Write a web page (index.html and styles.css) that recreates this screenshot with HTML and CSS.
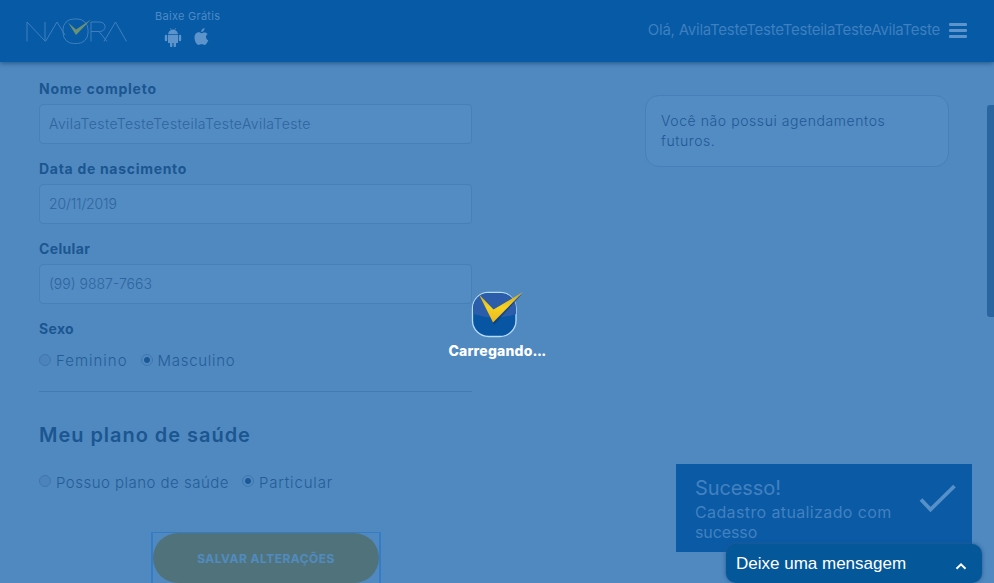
FILE: index.html
```html
<!DOCTYPE html>
<html lang="pt-BR">
<head>
<meta charset="utf-8">
<title>Naora</title>
<link rel="stylesheet" href="styles.css">
</head>
<body>
<header class="topbar">
  <svg class="logo" width="102" height="28" viewBox="0 0 102 28" role="img" aria-label="Naora">
    <g fill="none" stroke="#3f7fbe" stroke-width="1">
      <path d="M1 23.500V4l18 19V4M19.500 23.500L31 4l8 13" />
      <rect x="37" y="1" width="25" height="24.500" rx="10.500" />
      <path d="M65 23.500V4h8.500c7.500 0 7.500 9.500 0 9.500H65M73 13.500l8 10M78 23.500L89.500 4l11 19.500" />
    </g>
    <path class="logo-check" d="M42 4.500l8 7L65 1.500 50 17z" />
  </svg>
  <div class="download">
    <span class="download-label">Baixe Grátis</span>
    <div class="stores">
      <svg width="18" height="19" viewBox="0 0 18 19"><path d="M4 6a5 5 0 0 1 3-4L6 .4 6.400 0l1 1.700a6 6 0 0 1 3.200 0l1-1.700.4.400L11 2a5 5 0 0 1 3 4zM4 6.700h10V15h-2v3a1.200 1.200 0 0 1-2.400 0v-3H8.400v3A1.200 1.200 0 0 1 6 18v-3H4zM.8 8a1.200 1.200 0 0 1 2.400 0v4a1.200 1.200 0 0 1-2.400 0zM14.800 8a1.200 1.200 0 0 1 2.400 0v4a1.200 1.200 0 0 1-2.400 0z" /></svg>
      <svg width="15" height="18" viewBox="0 0 15 18"><path d="M10.500 0c.2 2-1.400 4-3.300 4C7 2.200 8.500.4 10.500 0zM13.700 6.100c-2.500 1.500-2.200 5 .6 6.200-.7 2-2.200 4.700-3.700 4.700-1.100 0-1.600-.7-3-.7s-1.900.7-2.900.7C2.600 17 .5 13.200.5 9.800c0-5 4-6.200 5.900-5 1 .6 1.600.5 2.600 0 1.700-.9 3.700-.3 4.700 1.300z" /></svg>
    </div>
  </div>
  <div class="user">
    <span class="greeting">Olá, AvilaTesteTesteTesteilaTesteAvilaTeste</span>
    <span class="burger"><i></i><i></i><i></i></span>
  </div>
</header>
<main class="page">
  <section class="form">
    <div class="field"><span class="label l1">Nome completo</span><div class="input i1"><span>AvilaTesteTesteTesteilaTesteAvilaTeste</span></div></div>
    <div class="field"><span class="label l2">Data de nascimento</span><div class="input i2"><span>20/11/2019</span></div></div>
    <div class="field"><span class="label l3">Celular</span><div class="input i3"><span>(99) 9887-7663</span></div></div>
    <span class="label l3">Sexo</span>
    <div class="options">
      <span class="radio"></span><span class="option o1">Feminino</span>
      <span class="radio checked"></span><span class="option o2">Masculino</span>
    </div>
    <h2 class="heading"><span>Meu plano de saúde</span></h2>
    <div class="options plan">
      <span class="radio"></span><span class="option o3">Possuo plano de saúde</span>
      <span class="radio checked"></span><span class="option o4">Particular</span>
    </div>
    <div class="save-frame"><div class="save"><span>SALVAR ALTERAÇÕES</span></div></div>
  </section>
  <aside class="card"><span class="c1">Você não possui agendamentos</span><br><span class="c2">futuros.</span></aside>
</main>
<div class="scrollbar"></div>
<div class="toast">
  <div class="toast-text">
    <div class="toast-title"><span>Sucesso!</span></div>
    <div class="toast-line"><span class="t1">Cadastro atualizado com</span><br><span class="t2">sucesso</span></div>
  </div>
  <svg width="38" height="30" viewBox="0 0 38 30"><path d="M2 15.500l9.500 10L35.500 2" /></svg>
</div>
<div class="chat"><span>Deixe uma mensagem</span>
  <svg width="12" height="8" viewBox="0 0 12 8"><path d="M1.500 6.800L6 2.300l4.500 4.500" /></svg>
</div>
<div class="loader">
  <svg width="54" height="48" viewBox="0 0 54 48">
    <defs>
      <linearGradient id="gold" x1="0" y1="0" x2="0" y2="1"><stop offset="0" stop-color="#d0a428" /><stop offset=".5" stop-color="#f7d31f" /><stop offset="1" stop-color="#ecb822" /></linearGradient>
      <clipPath id="tile"><rect x="3" y="3" width="43" height="43" rx="15" /></clipPath>
    </defs>
    <rect x="2.500" y="2.500" width="43.500" height="44" rx="16" fill="#0755a3" stroke="#b5dcf6" stroke-width="1.300" />
    <path clip-path="url(#tile)" d="M3 3h43v21q-21 7-43 0z" fill="#2b5daa" />
    <path d="M11 8l13 15L52 4 24 35z" fill="#123a70" opacity=".65" />
    <path d="M9 4.500l14.500 15L53 2 23 32.500z" fill="url(#gold)" />
  </svg>
  <span class="loading">Carregando<span class="dots">...</span></span>
</div>
</body>
</html>
```

FILE: styles.css
```css
* { box-sizing: border-box; }
body {
  margin: 0;
  height: 583px;
  overflow: hidden;
  background: #5089c0;
  color: #1d5d9f;
  font: 300 15px/20px Inter, "Open Sans", sans-serif;
}
span { white-space: nowrap; }
svg { display: block; flex: none; }
.topbar {
  position: relative;
  display: flex;
  height: 62px;
  padding-left: 26px;
  background: #065aa6;
  box-shadow: 0 1px 5px rgba(16, 65, 115, .75);
}
.logo { margin-top: 18px; overflow: visible; }
.logo-check { fill: #6c9272; }
.download { margin: 9px 0 0 27px; color: #4e8ac5; font-size: 11px; line-height: 14px; font-weight: 400; }
.download-label { letter-spacing: .28px; }
.stores { display: flex; gap: 12px; padding: 5px 0 0 9px; fill: #5c94cb; }
.user { display: flex; align-items: center; gap: 9px; margin: 0 27px 2px auto; color: #3f7fbe; }
.greeting { font-weight: 400; letter-spacing: -.23px; }
.burger { display: flex; flex-direction: column; gap: 3px; width: 18px; }
.burger i { height: 3px; background: #5c94cb; border-radius: 1px; }
.page { display: flex; justify-content: space-between; padding: 17px 45px 0 39px; }
.form { width: 433px; }
.field { height: 80px; }
.label { display: block; width: max-content; font-weight: 700; font-size: 14px; color: #1b5690; }
.l1 { letter-spacing: .77px; }
.l2 { letter-spacing: .7px; }
.l3 { letter-spacing: .35px; }
.input {
  height: 40px;
  margin-top: 5px;
  padding: 0 9px;
  border: 1px solid #477fb7;
  border-radius: 4px;
  background: #538cc3;
  color: #2d659c;
  font-size: 14px;
  line-height: 38px;
}
.i1 { letter-spacing: .41px; }
.i2 { letter-spacing: -.15px; }
.options { display: flex; align-items: center; height: 53px; padding: 1px 0 9px; border-bottom: 1px solid #427ab1; color: #245d96; }
.radio { width: 12px; height: 12px; margin-right: 5px; margin-bottom: 3px; border: 1px solid #3f76ae; border-radius: 50%; background: #4b83ba; flex: none; }
.option + .radio { margin-left: 13px; }
.options .checked { background: radial-gradient(circle, #1c5797 2.500px, #5089c0 3.500px); }
.o1 { letter-spacing: 1px; }
.o2 { letter-spacing: .7px; }
.o3 { letter-spacing: .48px; }
.o4 { letter-spacing: .85px; }
.heading { margin: 30px 0 0; font-size: 20px; line-height: 26px; font-weight: 600; letter-spacing: .96px; color: #1b5690; }
.options.plan { border-color: transparent; margin-top: 13px; }
.plan .radio { margin-bottom: 5px; }
.save-frame { width: 230px; height: 52px; margin: 18px 0 0 112px; border: 2px solid #347bc8; border-width: 1px 2px; }
.save { height: 50px; border-radius: 25px; background: #50737b; color: #508bc0; text-align: center; font-size: 12px; font-weight: 700; line-height: 51px; letter-spacing: .47px; }
.card { width: 304px; height: 72px; margin-top: 16px; padding: 15px; border: 1px solid #4780b8; border-radius: 14px; background: #538cc3; color: #1f5894; font-size: 14px; letter-spacing: .57px; }
.scrollbar { position: absolute; right: 0; top: 105px; width: 7px; height: 212px; border-radius: 3px 0 0 3px; background: #2b659f; }
.toast { position: absolute; left: 676px; top: 464px; display: flex; justify-content: space-between; width: 296px; height: 88px; padding: 12px 15px 0 19px; background: #0a5aa6; color: #4381bf; font-weight: 400; }
.toast-title { font-size: 20px; line-height: 25px; letter-spacing: -.1px; }
.toast-line { font-size: 16px; margin-top: 1px; }
.t1 { letter-spacing: .38px; }
.t2 { letter-spacing: -.1px; }
.toast svg { margin-top: 8px; fill: none; stroke: #5590c8; stroke-width: 3.800; }
.chat { position: absolute; left: 726px; top: 544px; display: flex; justify-content: space-between; align-items: center; width: 256px; height: 39px; padding: 0 15px 0 10px; border-radius: 10px; background: #045798; box-shadow: 0 0 4px #23588d; color: #fff; font: 400 17px/20px "Liberation Sans", sans-serif; }
.chat svg { margin-top: 5px; fill: none; stroke: #fff; stroke-width: 2; }
.loader { position: absolute; left: 0; top: 290px; display: flex; flex-direction: column; align-items: center; width: 994px; }
.loading { margin-top: 3px; font-weight: 800; font-size: 14px; letter-spacing: .2px; color: #fff; }
.dots { letter-spacing: -.6px; }
```
